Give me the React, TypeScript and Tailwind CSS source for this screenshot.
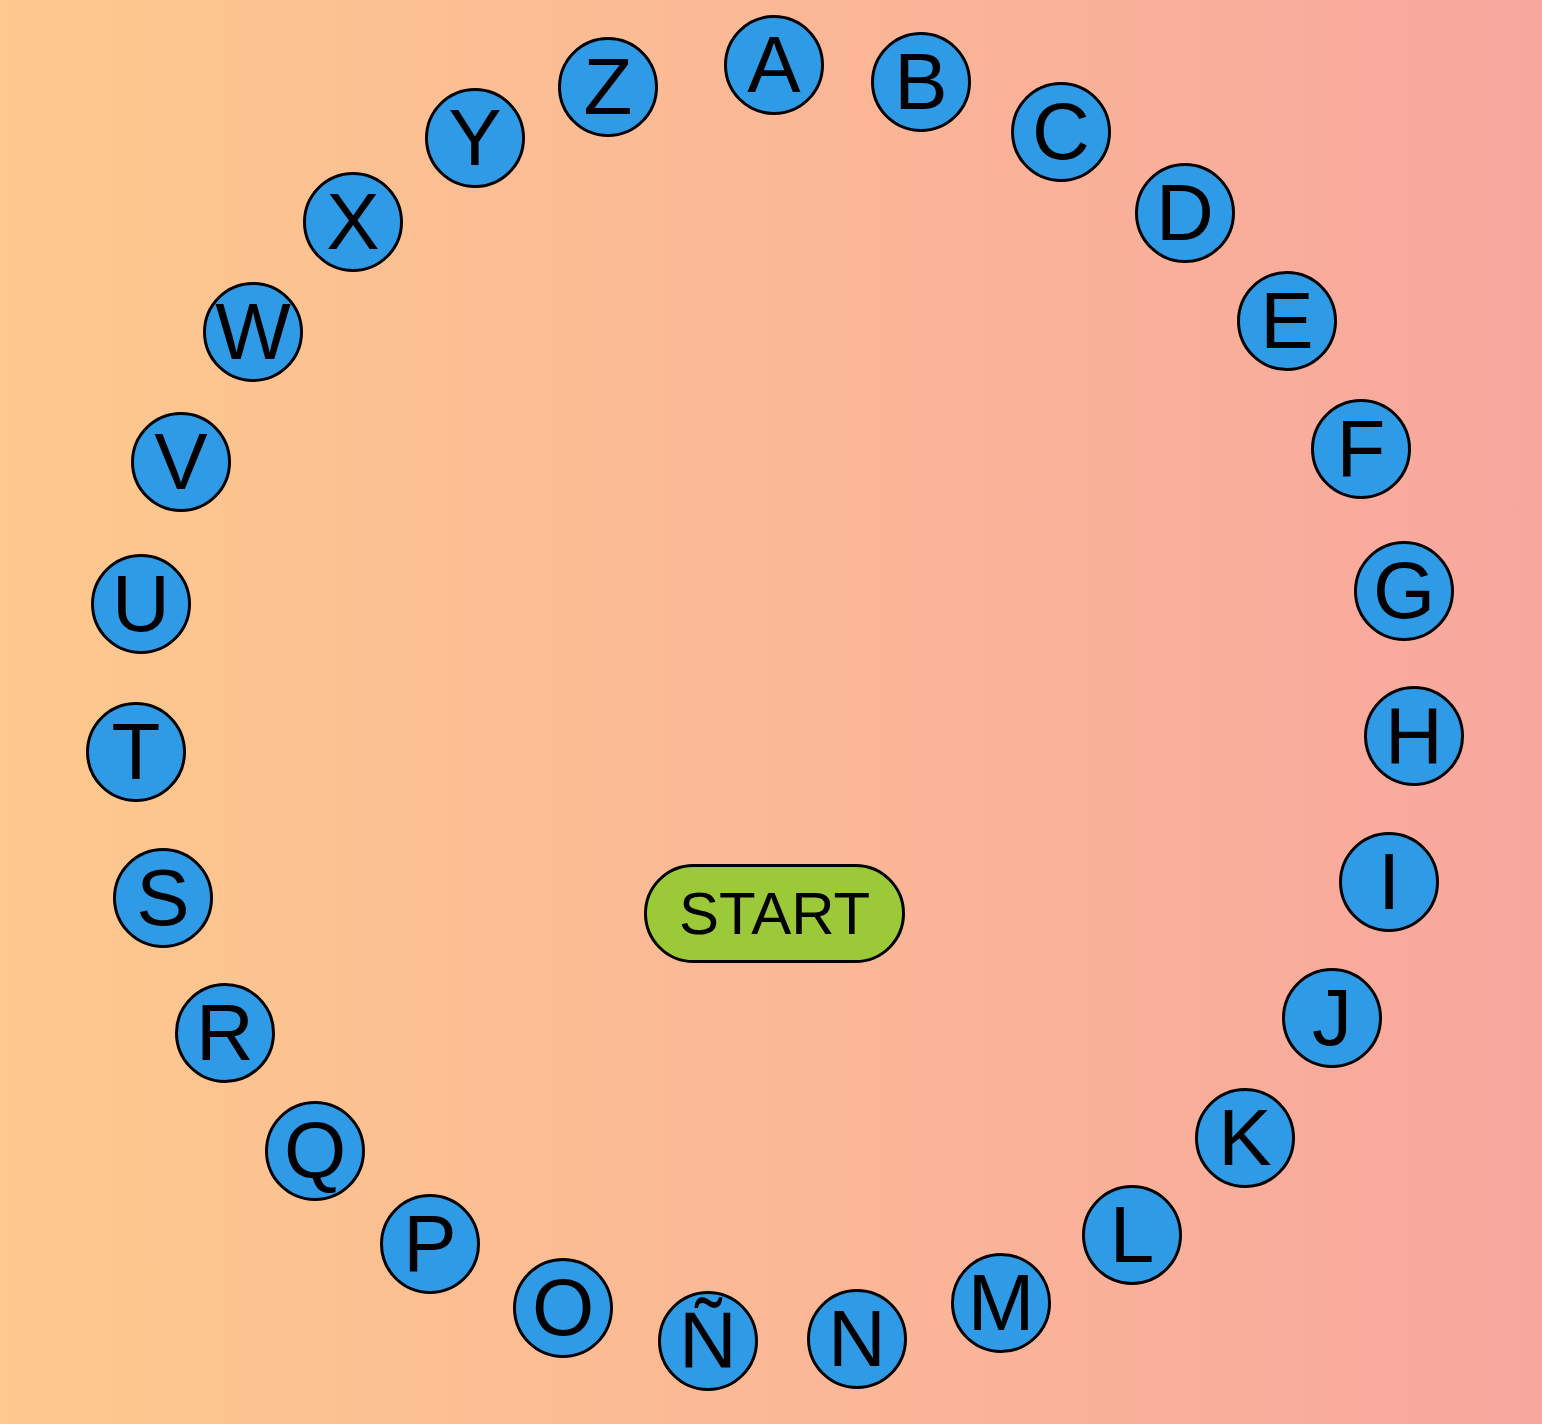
import React from "react";

const letters: { ch: string; x: number; y: number }[] = [
  { ch: "A", x: 774, y: 65 },
  { ch: "B", x: 921, y: 82 },
  { ch: "C", x: 1061, y: 132 },
  { ch: "D", x: 1185, y: 213 },
  { ch: "E", x: 1287, y: 321 },
  { ch: "F", x: 1361, y: 449 },
  { ch: "G", x: 1404, y: 591 },
  { ch: "H", x: 1414, y: 736 },
  { ch: "I", x: 1389, y: 882 },
  { ch: "J", x: 1332, y: 1018 },
  { ch: "K", x: 1245, y: 1138 },
  { ch: "L", x: 1132, y: 1235 },
  { ch: "M", x: 1001, y: 1303 },
  { ch: "N", x: 857, y: 1339 },
  { ch: "Ñ", x: 708, y: 1341 },
  { ch: "O", x: 563, y: 1308 },
  { ch: "P", x: 430, y: 1244 },
  { ch: "Q", x: 315, y: 1151 },
  { ch: "R", x: 225, y: 1033 },
  { ch: "S", x: 163, y: 898 },
  { ch: "T", x: 136, y: 752 },
  { ch: "U", x: 141, y: 604 },
  { ch: "V", x: 181, y: 462 },
  { ch: "W", x: 253, y: 332 },
  { ch: "X", x: 353, y: 222 },
  { ch: "Y", x: 475, y: 138 },
  { ch: "Z", x: 608, y: 87 },
];

const SIZE = 100;

export default function App() {
  return (
    <div className="w-[1542px] h-[1424px] overflow-hidden bg-gradient-to-r from-[#fdc98d] to-[#f8a79e] font-['Liberation_Sans',Arial,sans-serif]">
      <div className="relative w-full h-full">
        {letters.map((l) => (
          <div
            key={l.ch}
            className="absolute w-[100px] h-[100px] rounded-full border-[3px] border-black bg-[#2f9be6] flex items-center justify-center text-[80px] leading-none text-black"
            style={{ left: l.x - SIZE / 2, top: l.y - SIZE / 2 }}
          >
            {l.ch}
          </div>
        ))}

        <button className="absolute left-[644px] top-[864px] w-[261px] h-[99px] rounded-full border-[3px] border-black bg-[#9bc938] flex items-center justify-center text-[60px] leading-none text-black">
          START
        </button>
      </div>
    </div>
  );
}
